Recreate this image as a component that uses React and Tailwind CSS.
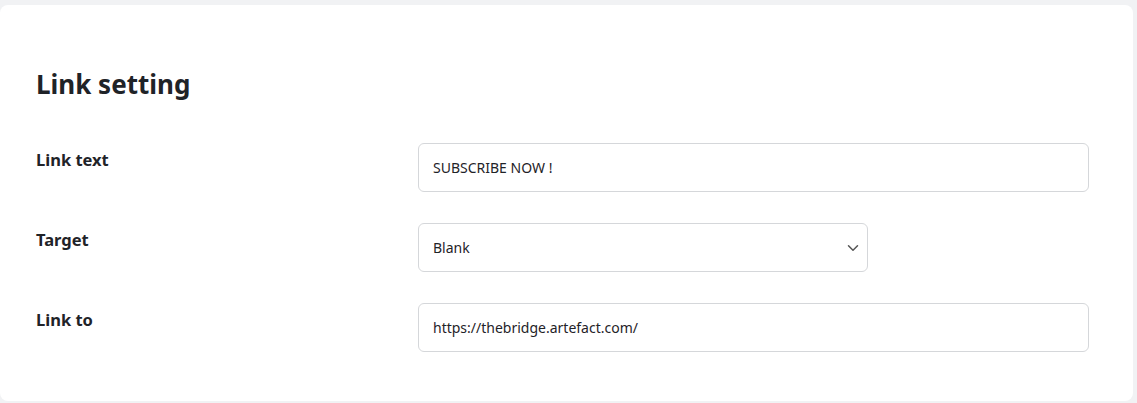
import React from "react";

const FIELDS = [
  { label: "Link text", type: "input", value: "SUBSCRIBE NOW !" },
  { label: "Target", type: "select", value: "Blank" },
  { label: "Link to", type: "input", value: "https://thebridge.artefact.com/" },
];

export default function App() {
  return (
    <div className="min-h-[403px] bg-[#f1f2f4] pt-[5px] pr-[4px] pb-[2px] font-['Noto_Sans',sans-serif]">
      <div className="min-h-[396px] rounded-lg bg-white pl-[36px] pr-[44px] pt-[60px]">
        <h2 className="text-[26px] font-bold leading-[38px] text-[#1f2328]">Link setting</h2>
        <div className="mt-[40px] flex flex-col gap-[31px]">
          {FIELDS.map((field) => (
            <div key={field.label} className="grid grid-cols-[382px_1fr]">
              <div className="pt-[5px] text-[16.5px] font-bold leading-[24px] text-[#1f2328]">{field.label}</div>
              {field.type === "select" ? (
                <div className="relative w-[450px]">
                  <select
                    defaultValue={field.value}
                    className="h-[49px] w-full appearance-none rounded-md border border-[#d5d7da] bg-white pl-[14px] pr-8 text-[14px] text-[#1f2328] outline-none"
                  >
                    <option>Blank</option>
                    <option>Self</option>
                  </select>
                  <svg
                    className="pointer-events-none absolute right-[9px] top-[19px] h-[12px] w-[12px] text-[#555]"
                    viewBox="0 0 16 16"
                    fill="none"
                    stroke="currentColor"
                    strokeWidth="2"
                    strokeLinecap="round"
                    strokeLinejoin="round"
                  >
                    <path d="M2 5l6 6 6-6" />
                  </svg>
                </div>
              ) : (
                <input
                  defaultValue={field.value}
                  className="h-[49px] w-full rounded-md border border-[#d5d7da] bg-white px-[14px] text-[14px] text-[#1f2328] outline-none"
                />
              )}
            </div>
          ))}
        </div>
      </div>
    </div>
  );
}
